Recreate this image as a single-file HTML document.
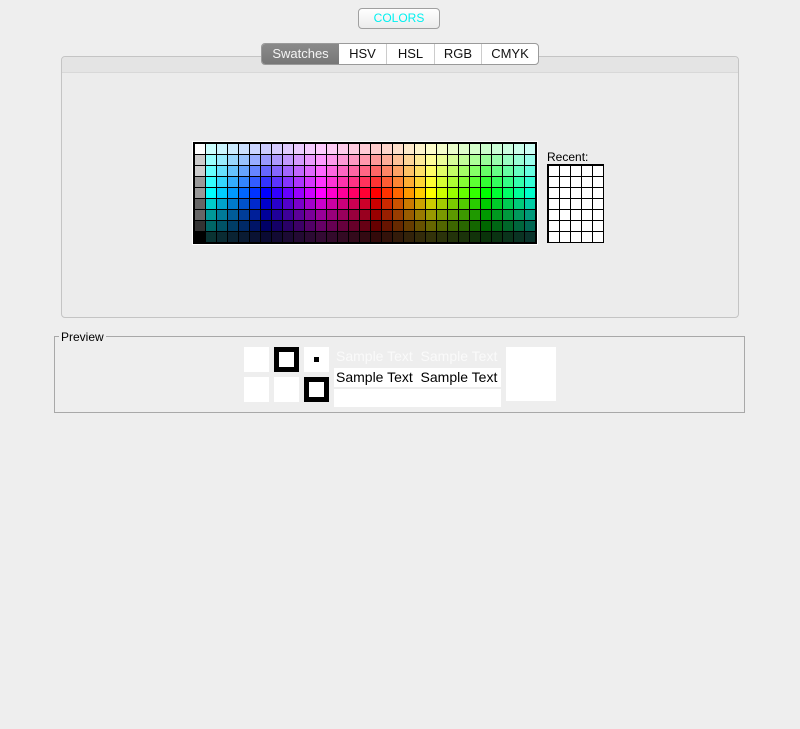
<!DOCTYPE html><html><head><style>
body{margin:0;width:800px;height:729px;background:#eeeeee;font-family:"Liberation Sans",sans-serif;position:relative;overflow:hidden}
.a{position:absolute}
#btn{left:358px;top:8px;width:80px;height:19px;border:1px solid #a0a0a0;border-radius:4px;background:linear-gradient(#fff,#ececec);color:#00f0f0;font-size:12px;text-align:center;line-height:19px}
#tabp{left:61px;top:56px;width:676px;height:260px;border:1px solid #c4c4c4;border-radius:4px;background:#ececec}
#tabp:before{content:"";position:absolute;left:0;right:0;top:0;height:15px;background:#e4e4e4;border-bottom:1px solid #d8d8d8;border-radius:4px 4px 0 0}
#tabs{left:261px;top:43px;height:20px;width:276px;border:1px solid #9a9a9a;border-radius:4px;background:#fff;display:flex;font-size:13px;overflow:hidden}
#tabs div{text-align:center;line-height:20px;border-left:1px solid #ccc;color:#111;box-sizing:border-box}
#tabs div.s{background:linear-gradient(#8a8a8a,#777);color:#f4f4f4;border-left:none}
#grid{left:193px;top:142px;border:1px solid #000;padding:1px 0 0 1px;background:#000;display:grid;grid-template-columns:repeat(31,10px);grid-auto-rows:10px;gap:1px;width:341px;height:99px;box-sizing:content-box;outline:1px solid #fff}
#rec{left:547px;top:164px;border:1px solid #000;padding:1px 0 0 1px;background:#000;display:grid;grid-template-columns:repeat(5,10px);grid-auto-rows:10px;gap:1px}
#rec div{background:#fff}
#prev{left:54px;top:336px;width:689px;height:75px;border:1px solid #a8a8a8}
.w{background:#fff;position:absolute}
.f{position:absolute;box-sizing:border-box;border:5px solid #000;background:#fff}
.t{position:absolute;font-size:14px;white-space:pre}
</style></head><body>
<div id="btn" class="a">COLORS</div>
<div id="tabp" class="a"></div>
<div id="tabs" class="a"><div class="s" style="width:77px">Swatches</div><div style="border-left:none;width:47px">HSV</div><div style="width:48px">HSL</div><div style="width:47px">RGB</div><div style="width:57px">CMYK</div></div>
<div id="grid" class="a"></div>
<div class="a" style="left:547px;top:150px;font-size:12px">Recent:</div>
<div id="rec" class="a"></div>
<div id="prev" class="a"></div>
<div class="a" style="left:59px;top:330px;background:#eee;padding:0 2px;font-size:12px">Preview</div>
<div class="w" style="left:244px;top:347px;width:25px;height:25px"></div>
<div class="f" style="left:274px;top:347px;width:25px;height:25px"></div>
<div class="w" style="left:304px;top:347px;width:25px;height:25px"><div style="position:absolute;left:10px;top:10px;width:5px;height:5px;background:#000"></div></div>
<div class="w" style="left:244px;top:377px;width:25px;height:25px"></div>
<div class="w" style="left:274px;top:377px;width:25px;height:25px"></div>
<div class="f" style="left:304px;top:377px;width:25px;height:25px"></div>
<div class="t" style="left:336px;top:348px;color:#fafafa">Sample Text  Sample Text</div>
<div class="w" style="left:334px;top:368px;width:167px;height:19px"></div>
<div class="t" style="left:336px;top:369px;color:#000">Sample Text  Sample Text</div>
<div class="w" style="left:334px;top:389px;width:167px;height:18px"></div>
<div class="w" style="left:506px;top:347px;width:50px;height:54px"></div>
<script>
function hsv(h,s,v){h=((h%360)+360)%360;var c=v*s,x=c*(1-Math.abs((h/60)%2-1)),m=v-c,r,g,b;
if(h<60){r=c;g=x;b=0}else if(h<120){r=x;g=c;b=0}else if(h<180){r=0;g=c;b=x}else if(h<240){r=0;g=x;b=c}else if(h<300){r=x;g=0;b=c}else{r=c;g=0;b=x}
return"rgb("+Math.round((r+m)*255)+","+Math.round((g+m)*255)+","+Math.round((b+m)*255)+")"}
var S=[0.2,0.4,0.6,0.8,1,1,1,1,0.8],V=[1,1,1,1,1,0.8,0.6,0.4,0.2],G=[255,204,204,153,153,102,102,51,0];
var gr=document.getElementById('grid'),h='';
for(var r=0;r<9;r++)for(var c=0;c<31;c++){var col=c==0?"rgb("+G[r]+","+G[r]+","+G[r]+")":hsv(180+(c-1)*12,S[r],V[r]);h+='<div style="background:'+col+'"></div>'}
gr.innerHTML=h;
var rc='';for(var i=0;i<35;i++)rc+='<div></div>';document.getElementById('rec').innerHTML=rc;
</script>
</body></html>
